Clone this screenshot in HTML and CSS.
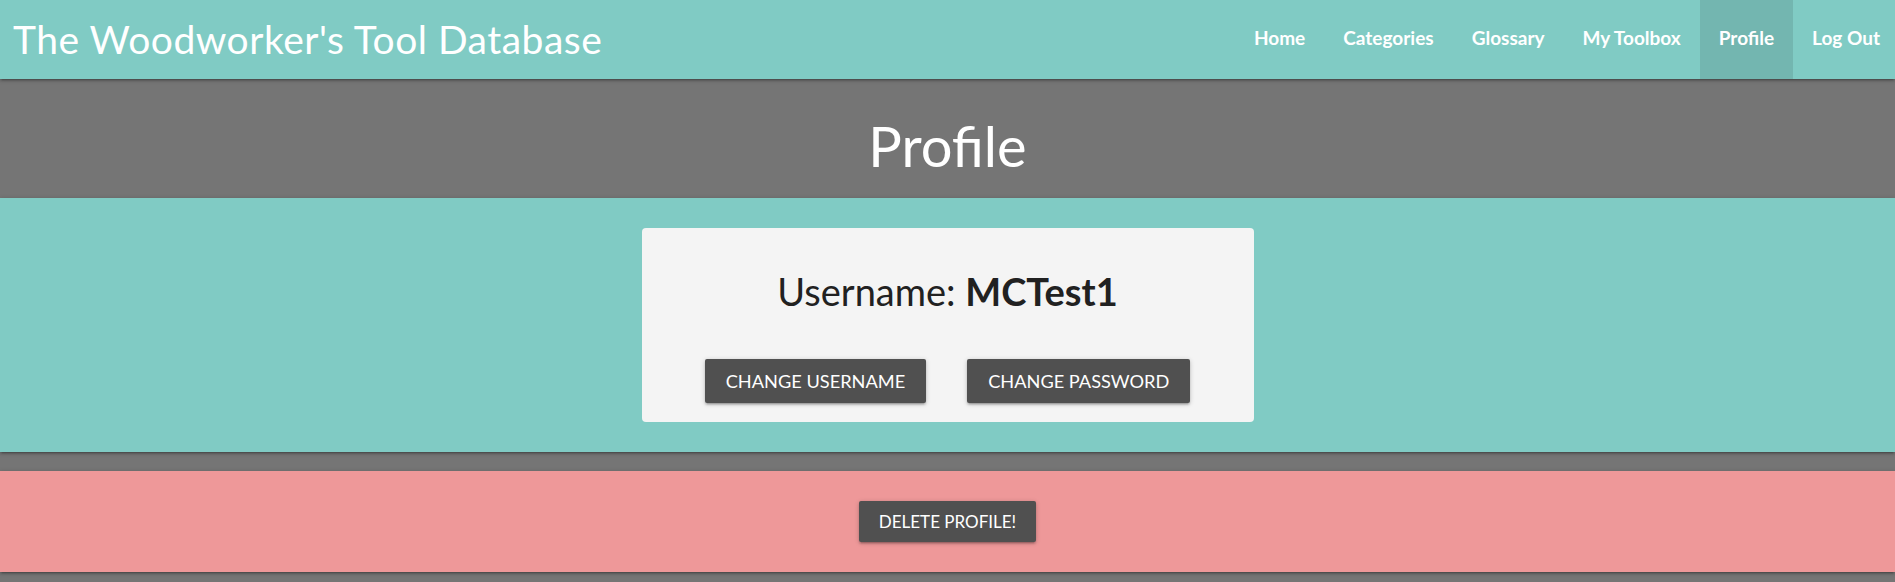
FILE: index.html
```html
<!DOCTYPE html>
<html lang="en">
<head>
<meta charset="utf-8">
<title>Profile - The Woodworker's Tool Database</title>
<link rel="stylesheet" href="styles.css">
</head>
<body>
<header class="navbar">
  <a class="brand" href="#">The Woodworker's Tool Database</a>
  <nav class="nav-links">
    <a href="#">Home</a>
    <a href="#">Categories</a>
    <a href="#">Glossary</a>
    <a href="#">My Toolbox</a>
    <a href="#" class="active">Profile</a>
    <a href="#">Log Out</a>
  </nav>
</header>
<section class="title-bar">
  <h1>Profile</h1>
</section>
<section class="profile-section">
  <div class="card">
    <h2 class="username">Username: <strong>MCTest1</strong></h2>
    <div class="card-actions">
      <a class="btn" href="#">Change Username</a>
      <a class="btn" href="#">Change Password</a>
    </div>
  </div>
</section>
<section class="danger-section">
  <a class="btn btn-small" href="#">Delete Profile!</a>
</section>
</body>
</html>
```
FILE: styles.css
```css
* { box-sizing: border-box; }
html, body { margin: 0; padding: 0; }
body {
  background: #757575;
  font-family: Lato, "Noto Sans", sans-serif;
  color: #212121;
  min-height: 582px;
}
a { text-decoration: none; }

.navbar {
  position: relative;
  z-index: 3;
  height: 79px;
  background: #80cbc4;
  display: flex;
  justify-content: space-between;
  align-items: stretch;
  box-shadow: 0 2px 2px 0 rgba(0,0,0,0.14), 0 3px 1px -2px rgba(0,0,0,0.12), 0 1px 5px 0 rgba(0,0,0,0.2);
}
.brand {
  color: #fff;
  font-size: 39px;
  line-height: 79px;
  padding-left: 13px;
  padding-bottom: 8px;
  letter-spacing: 0.5px;
}
.nav-links {
  display: flex;
  align-items: stretch;
  padding-right: 15px;
}
.nav-links a {
  color: #fff;
  font-size: 19px;
  font-weight: 700;
  display: flex;
  align-items: center;
  padding: 0 19px 5px;
}
.nav-links a:last-child { padding-right: 0; }
.nav-links a.active { background: rgba(0,0,0,0.1); }

.title-bar {
  height: 119px;
  display: flex;
  align-items: center;
  justify-content: center;
}
.title-bar h1 {
  margin: 0;
  color: #fff;
  font-weight: 400;
  font-size: 56px;
  line-height: 1;
  padding-top: 14px;
}

.profile-section {
  position: relative;
  z-index: 2;
  background: #80cbc4;
  padding: 30px 0;
  display: flex;
  justify-content: center;
  box-shadow: 0 2px 2px 0 rgba(0,0,0,0.14), 0 3px 1px -2px rgba(0,0,0,0.12), 0 1px 5px 0 rgba(0,0,0,0.2);
}
.card {
  width: 612px;
  height: 194px;
  background: #f4f4f4;
  border-radius: 4px;
  display: flex;
  flex-direction: column;
  align-items: center;
}
.username {
  margin: 40px 0 0;
  font-size: 38px;
  font-weight: 400;
  line-height: 46px;
}
.username strong { font-weight: 700; }
.card-actions {
  margin-top: 45px;
  display: flex;
  gap: 41px;
}

.btn {
  display: inline-flex;
  align-items: center;
  justify-content: center;
  height: 44px;
  padding: 0 21px;
  background: #505050;
  color: #fff;
  font-size: 18.2px;
  text-transform: uppercase;
  border-radius: 2px;
  box-shadow: 0 2px 2px 0 rgba(0,0,0,0.14), 0 3px 1px -2px rgba(0,0,0,0.12), 0 1px 5px 0 rgba(0,0,0,0.2);
}
.btn-small {
  height: 41px;
  font-size: 17px;
  padding: 0 20px;
}

.danger-section {
  position: relative;
  z-index: 1;
  margin-top: 19px;
  height: 101px;
  background: #ee9899;
  display: flex;
  align-items: center;
  justify-content: center;
  box-shadow: 0 2px 2px 0 rgba(0,0,0,0.14), 0 3px 1px -2px rgba(0,0,0,0.12), 0 1px 5px 0 rgba(0,0,0,0.2);
}
```
